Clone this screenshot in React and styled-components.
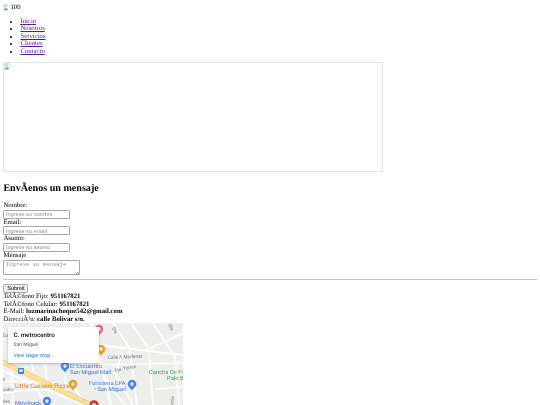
import React from 'react';
import styled, { createGlobalStyle } from 'styled-components';

const Global = createGlobalStyle`
  html, body {
    margin: 0;
    padding: 0;
    background: #fff;
    overflow: hidden;
  }
  body {
    font-family: "Liberation Serif", serif;
    font-size: 6.75px;
    line-height: 7.6px;
    color: #000;
    text-rendering: geometricPrecision;
  }
`

const Page = styled.div`
  padding: 3.4px 3.4px 0;
  height: 405px;
  box-sizing: border-box;
  overflow: hidden;
  filter: blur(0.3px);
`
const Logo = styled.div`
  display: flex;
  align-items: center;
  height: 8px;
  font-weight: normal;
`
const NavList = styled.ul`
  margin: 6.2px 0 6.2px;
  padding: 0 0 0 17px;
`
const NavItem = styled.li`
  height: 7.6px;
`
const NavLink = styled.a`
  color: #551a8b;
  text-decoration: underline;
`
const Frame = styled.div`
  width: 380px;
  height: 110px;
  box-sizing: border-box;
  border: 1px solid #e4e4e4;
`
const Heading = styled.h2`
  font-size: 10.1px;
  line-height: 12px;
  font-weight: bold;
  margin: 10.9px 0 7.5px;
`
const FieldLabel = styled.div`
  height: 7.6px;
  line-height: 7.6px;
`
const Input = styled.input`
  display: block;
  width: 67px;
  height: 9px;
  box-sizing: border-box;
  border: 0.7px solid #a8a8a8;
  border-radius: 1px;
  padding: 0 1.5px;
  margin: 0;
  font-family: "Liberation Sans", sans-serif;
  font-size: 5.6px;
  background: #fff;
  &::placeholder { color: #8f8f8f; opacity: 1; }
`
const TextAreaBox = styled.div`
  position: relative;
  width: 77px;
  height: 15.5px;
`
const TextArea = styled.textarea`
  display: block;
  width: 100%;
  height: 100%;
  box-sizing: border-box;
  border: 0.7px solid #a8a8a8;
  border-radius: 1px;
  padding: 1px 1.5px;
  margin: 0;
  font-family: "Liberation Mono", monospace;
  font-size: 5.6px;
  line-height: 6.4px;
  overflow: hidden;
  resize: none;
  &::placeholder { color: #8f8f8f; opacity: 1; }
`
const Grip = styled.span`
  position: absolute;
  right: 1px;
  bottom: 1px;
  width: 3px;
  height: 3px;
  background: linear-gradient(135deg, transparent 50%, #8c8c8c 50%, #8c8c8c 65%, transparent 65%, transparent 80%, #8c8c8c 80%);
`
const Rule = styled.hr`
  margin: 4.2px 0 3.8px;
  border: none;
  border-top: 1px solid #c4c4c4;
`
const Submit = styled.button`
  display: block;
  width: 25px;
  height: 9px;
  padding: 0;
  box-sizing: border-box;
  border: 0.7px solid #a8a8a8;
  border-radius: 1.4px;
  background: #efefef;
  color: #000;
  font-family: "Liberation Sans", sans-serif;
  font-size: 5.6px;
  line-height: 7px;
`
const Info = styled.div`
  height: 7.6px;
  white-space: nowrap;
`
const Map = styled.div`
  position: relative;
  width: 180px;
  height: 82px;
  background: #eeeeec;
  overflow: hidden;
`
const MapCard = styled.div`
  position: absolute;
  left: 5px;
  top: 4px;
  width: 91px;
  height: 36px;
  box-sizing: border-box;
  padding: 4.5px 5px;
  background: #fff;
  box-shadow: 0 0.5px 2px rgba(0, 0, 0, 0.25);
  font-family: "Roboto", "Liberation Sans", sans-serif;
`
const CardTitle = styled.div`
  font-size: 6.2px;
  line-height: 7px;
  font-weight: 500;
  color: #000;
`
const CardSub = styled.div`
  margin-top: 3px;
  font-size: 5.1px;
  line-height: 6px;
  color: #5b5b5b;
`
const CardLink = styled.a`
  display: block;
  margin-top: 5.5px;
  font-size: 5.1px;
  line-height: 6px;
  color: #1a73e8;
  text-decoration: none;
`

function BrokenImage({ size = 7 }) {
  return (
    <svg width={size} height={size} viewBox="0 0 16 16" style={{ display: 'block', flex: 'none' }}>
      <path d="M1 1h10l4 4v10H1z" fill="#fff" stroke="#b4b4b4" />
      <path d="M2 14l4-6 3 3 2-1 3 3v1H2z" fill="#6cae6c" />
      <path d="M2 2h8v6H2z" fill="#c6daf7" />
      <path d="M8 16L16 8v8z" fill="#fff" />
    </svg>
  )
}

function Pin({ x, y, color, s = 1 }) {
  return (
    <g transform={`translate(${x} ${y}) scale(${s})`}>
      <path d="M0 4C-1 2-3.6 0.6-3.6-1.6a3.6 3.6 0 0 1 7.2 0C3.6 0.6 1 2 0 4z" fill={color} />
      <circle cx="0" cy="-1.6" r="1.5" fill="#fff" fillOpacity="0.85" />
    </g>
  )
}

const labelFont = 'Roboto, "Liberation Sans", sans-serif'

function MapDrawing() {
  return (
    <svg width="180" height="82" viewBox="0 0 180 82" style={{ display: 'block' }}>
      <g fill="none" stroke="#fff" strokeWidth="1.6">
        <path d="M88 0L108 82" strokeWidth="2.6" />
        <path d="M96 22L180 32" strokeWidth="2" />
        <path d="M96 42L180 40" />
        <path d="M110 0L126 24L134 82" />
        <path d="M128 0L146 26L180 10" />
        <path d="M150 0L172 34L176 82" />
        <path d="M120 30L112 50L130 82" />
        <path d="M146 30L150 82" />
        <path d="M100 52L122 82" />
        <path d="M0 48L80 82" />
        <path d="M8 34L10 82" />
        <path d="M0 58L50 60" />
        <path d="M28 38L32 54" />
        <path d="M42 38L44 62" />
        <path d="M60 38L64 70" />
        <path d="M0 70L34 66L42 82" />
        <path d="M70 62L82 82" />
        <path d="M88 60L130 58" />
        <path d="M160 50L180 50" />
        <path d="M152 66L180 64" />
      </g>
      <path d="M-2 38L92 84" fill="none" stroke="#f2c777" strokeWidth="5" />
      <path d="M-2 38L92 84" fill="none" stroke="#fde293" strokeWidth="3.6" />
      <rect x="15" y="45" width="6" height="6" rx="1" fill="#3f7fe0" />
      <rect x="16.4" y="46.4" width="3.2" height="2.4" fill="#fff" />
      <Pin x={96} y={8} color="#e8608d" s={1.2} />
      <Pin x={98} y={28} color="#ef9b1e" s={1.2} />
      <Pin x={62} y={45} color="#4a84e6" s={1.2} />
      <Pin x={70} y={63} color="#ef9b1e" s={1.2} />
      <Pin x={129} y={63} color="#4a84e6" s={1.2} />
      <Pin x={44} y={80} color="#4a84e6" s={1.2} />
      <Pin x={91} y={84} color="#d6332c" s={1.3} />
      <g fontFamily={labelFont} fontSize="5.8">
        <text x="67" y="45" fill="#3d76d8">El Encuentro</text>
        <text x="67" y="51" fill="#3d76d8">San Miguel Mall</text>
        <text x="86" y="61.5" fill="#3d76d8">Ferreteria EPA</text>
        <text x="91" y="67.5" fill="#3d76d8">• San Miguel</text>
        <text x="12" y="64.5" fill="#d8872a" fontSize="6.2">Little Caesars Pizza</text>
        <text x="12" y="81.5" fill="#3d76d8">Móvilnack</text>
        <text x="146" y="51" fill="#3e9a5e">Cancha De Fu</text>
        <text x="164" y="57" fill="#3e9a5e">Palo B</text>
      </g>
      <g fontFamily={labelFont} fontSize="4.6" fill="#757575">
        <text x="105" y="36" transform="rotate(-2 105 36)">Calle A Marferrer</text>
        <text x="112" y="49" transform="rotate(-11 112 49)">Pje. Torres</text>
        <text x="0" y="14">Ca</text>
        <text x="0" y="58">e</text>
        <text x="0" y="68">uidro</text>
        <text x="0" y="80">iles</text>
        <text x="109" y="5" transform="rotate(62 109 5)">Sfe</text>
        <text x="165" y="2" transform="rotate(62 165 2)">Sfe</text>
        <text x="170" y="82" transform="rotate(-82 170 82)">acia</text>
      </g>
    </svg>
  )
}

export default function App() {
  return (
    <Page>
      <Global />
      <Logo><BrokenImage /><span>100</span></Logo>
      <NavList>
        {['Inicio', 'Nosotros', 'Servicios', 'Clientes', 'Contacto'].map(item => (
          <NavItem key={item}><NavLink href="#">{item}</NavLink></NavItem>
        ))}
      </NavList>
      <Frame><BrokenImage /></Frame>
      <Heading>{'EnvÃ\u00ADenos un mensaje'}</Heading>
      <form>
        <FieldLabel>Nombre:</FieldLabel>
        <Input placeholder="Ingrese su nombre" />
        <FieldLabel>Email:</FieldLabel>
        <Input placeholder="Ingrese su email" />
        <FieldLabel>Asunto:</FieldLabel>
        <Input placeholder="Ingrese su asunto" />
        <FieldLabel>Mensaje</FieldLabel>
        <TextAreaBox>
          <TextArea placeholder="Ingrese su mensaje" />
          <Grip />
        </TextAreaBox>
        <Rule />
        <Submit type="button">Submit</Submit>
      </form>
      <Info>{'TelÃ©fono Fijo: '}<b>951167821</b></Info>
      <Info>{'TelÃ©fono Celular: '}<b>951167821</b></Info>
      <Info>E-Mail: <b>luzmarinachoque542@gmail.com</b></Info>
      <Info>{'DirecciÃ³n: '}<b>calle Bolivar s/n.</b></Info>
      <Map>
        <MapDrawing />
        <MapCard>
          <CardTitle>C. metrocentro</CardTitle>
          <CardSub>San Miguel</CardSub>
          <CardLink href="#">View larger map</CardLink>
        </MapCard>
      </Map>
    </Page>
  )
}
